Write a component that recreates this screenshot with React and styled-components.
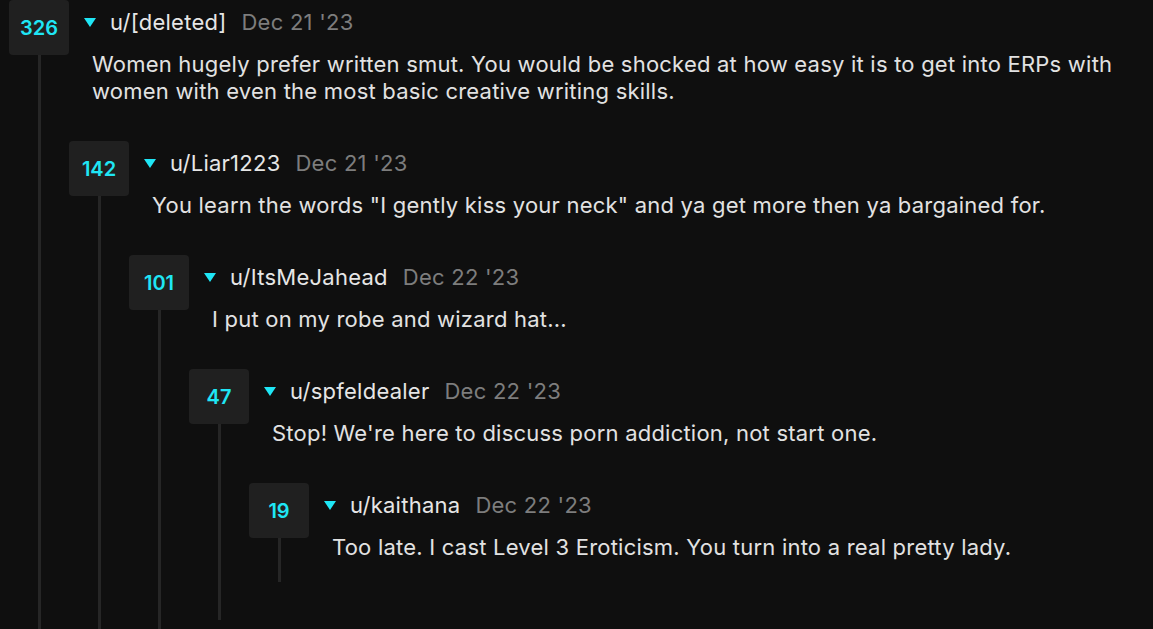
import React from "react";
import styled, { createGlobalStyle } from "styled-components";

const Global = createGlobalStyle`
  html, body { margin: 0; padding: 0; background: #0f0f0f; }
  body { font-family: Inter, "Noto Sans", sans-serif; overflow: hidden; }
`;

const Page = styled.div`
  background: #0f0f0f;
  min-height: 629px;
  height: 629px;
  overflow: hidden;
  padding: 0 9px 0 9px;
  box-sizing: border-box;
`;

const CommentWrap = styled.div`
  display: grid;
  grid-template-columns: 60px 1fr;
  padding-bottom: 21px;
  margin-bottom: ${(p) => (p.$root ? "0" : "17px")};
`;

const Rail = styled.div`
  display: flex;
  flex-direction: column;
  align-items: center;
`;

const Score = styled.div`
  width: 60px;
  height: 55px;
  flex: none;
  border-radius: 4px;
  background: #202020;
  color: #1fe6f5;
  font-weight: 600;
  font-size: 20px;
  display: flex;
  align-items: center;
  justify-content: center;
`;

const Line = styled.div`
  width: 3px;
  flex: 1;
  background: #262626;
  margin-left: 1px;
  margin-bottom: -21px;
`;

const Main = styled.div`
  display: flex;
  flex-direction: column;
  min-width: 0;
`;

const Header = styled.div`
  height: 44px;
  display: flex;
  align-items: center;
  padding-left: 15px;
  font-size: 22px;
  letter-spacing: 0.25px;
`;

const Caret = styled.svg`
  width: 12px;
  height: 9px;
  margin-right: 14px;
  margin-top: 1px;
  flex: none;
`;

const Author = styled.span`
  color: #e6e6e6;
`;

const DateText = styled.span`
  color: #7d7d7d;
  margin-left: 15px;
`;

const Body = styled.p`
  margin: 7px 0 0 0;
  padding-left: 23px;
  color: #e2e2e2;
  font-size: 22px;
  line-height: 27px;
  letter-spacing: 0.22px;
`;

const Replies = styled.div`
  padding-top: 36px;
`;

const data = {
  score: 326,
  author: "u/[deleted]",
  date: "Dec 21 '23",
  body:
    "Women hugely prefer written smut. You would be shocked at how easy it is to get into ERPs with women with even the most basic creative writing skills.",
  reply: {
    score: 142,
    author: "u/Liar1223",
    date: "Dec 21 '23",
    body:
      'You learn the words "I gently kiss your neck" and ya get more then ya bargained for.',
    reply: {
      score: 101,
      author: "u/ItsMeJahead",
      date: "Dec 22 '23",
      body: "I put on my robe and wizard hat...",
      reply: {
        score: 47,
        author: "u/spfeldealer",
        date: "Dec 22 '23",
        body: "Stop! We're here to discuss porn addiction, not start one.",
        reply: {
          score: 19,
          author: "u/kaithana",
          date: "Dec 22 '23",
          body:
            "Too late. I cast Level 3 Eroticism. You turn into a real pretty lady.",
        },
      },
    },
  },
};

function Comment({ c, root }) {
  return (
    <CommentWrap $root={root}>
      <Rail>
        <Score>{c.score}</Score>
        <Line />
      </Rail>
      <Main>
        <Header>
          <Caret viewBox="0 0 12 9">
            <polygon points="0,0 12,0 6,9" fill="#1fe6f5" />
          </Caret>
          <Author>{c.author}</Author>
          <DateText>{c.date}</DateText>
        </Header>
        <Body>{c.body}</Body>
        {c.reply && (
          <Replies>
            <Comment c={c.reply} />
          </Replies>
        )}
      </Main>
    </CommentWrap>
  );
}

export default function App() {
  return (
    <>
      <Global />
      <Page>
        <Comment c={data} root />
      </Page>
    </>
  );
}
